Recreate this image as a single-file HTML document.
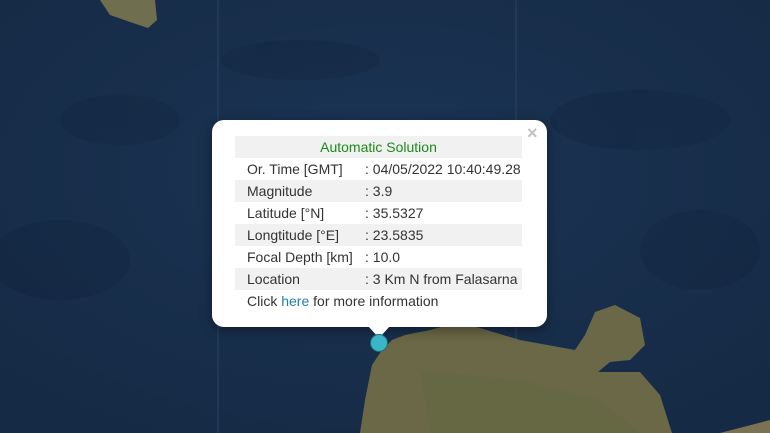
<!DOCTYPE html>
<html><head><meta charset="utf-8"><style>
html,body{margin:0;padding:0;width:770px;height:433px;overflow:hidden;background:#173050;font-family:"Liberation Sans",Arial,sans-serif}
.map{position:absolute;left:0;top:0}
.pop{position:absolute;left:212px;top:120px;width:335px;height:207px;background:#fff;border-radius:12px;box-shadow:0 3px 12px rgba(0,0,0,.4)}
.tip{position:absolute;left:368px;top:326px;width:0;height:0;border-left:11px solid transparent;border-right:11px solid transparent;border-top:12px solid #fff}
.x{position:absolute;left:527px;top:123px;color:#c3c3c3;font-size:18px;font-weight:bold}
table{position:absolute;left:235px;top:136px;width:287px;border-collapse:collapse;font-size:14px;color:#333}
td{height:22px;padding:0;white-space:nowrap}
td.k{padding-left:12px;width:118px}
tr.g td{background:#f1f1f1}
.h{text-align:center;color:#1c8a1c}
a{color:#1f7fb5;text-decoration:none}
.dot{position:absolute;left:370px;top:334px;width:16px;height:16px;border-radius:50%;background:#3ab6c6;border:1px solid #1d6c78}
</style></head><body>
<svg class="map" width="770" height="433">
<defs><radialGradient id="s" cx="50%" cy="40%" r="70%"><stop offset="0" stop-color="#1b3455"/><stop offset="1" stop-color="#152a44"/></radialGradient></defs>
<rect width="770" height="433" fill="url(#s)"/>
<g fill="#10223a" opacity=".3">
<ellipse cx="60" cy="260" rx="70" ry="40"/><ellipse cx="120" cy="120" rx="60" ry="25"/><ellipse cx="640" cy="120" rx="90" ry="30"/><ellipse cx="300" cy="60" rx="80" ry="20"/><ellipse cx="700" cy="250" rx="60" ry="40"/>
</g>
<line x1="218" y1="0" x2="218" y2="433" stroke="#2a4462" stroke-width="1"/>
<line x1="516" y1="0" x2="516" y2="433" stroke="#2a4462" stroke-width="1"/>
<path d="M100 0 L155 0 L157 20 L148 28 L130 22 L110 15 Z" fill="#6f6e4e"/>
<path d="M372 365 L382 350 L392 340 L405 335 L430 330 L460 322 L520 340 L575 350 L585 335 L595 312 L615 305 L640 318 L645 345 L630 360 L610 362 L598 372 L640 372 L660 395 L672 433 L360 433 L365 400 Z" fill="#6b6847"/>
<path d="M420 370 L520 380 L600 400 L640 433 L430 433 Z" fill="#62683f" opacity=".5"/>
<path d="M720 433 L770 420 L770 433 Z" fill="#7a7252"/>
</svg>
<div class="pop"></div>
<div class="tip"></div>
<div class="x">×</div>
<table>
<tr class="g"><td colspan="2" class="h">Automatic Solution</td></tr>
<tr><td class="k">Or. Time [GMT]</td><td>: 04/05/2022 10:40:49.28</td></tr>
<tr class="g"><td class="k">Magnitude</td><td>: 3.9</td></tr>
<tr><td class="k">Latitude [°N]</td><td>: 35.5327</td></tr>
<tr class="g"><td class="k">Longtitude [°E]</td><td>: 23.5835</td></tr>
<tr><td class="k">Focal Depth [km]</td><td>: 10.0</td></tr>
<tr class="g"><td class="k">Location</td><td>: 3 Km N from Falasarna</td></tr>
<tr><td class="k" colspan="2">Click <a>here</a> for more information</td></tr>
</table>
<div class="dot"></div>
</body></html>
